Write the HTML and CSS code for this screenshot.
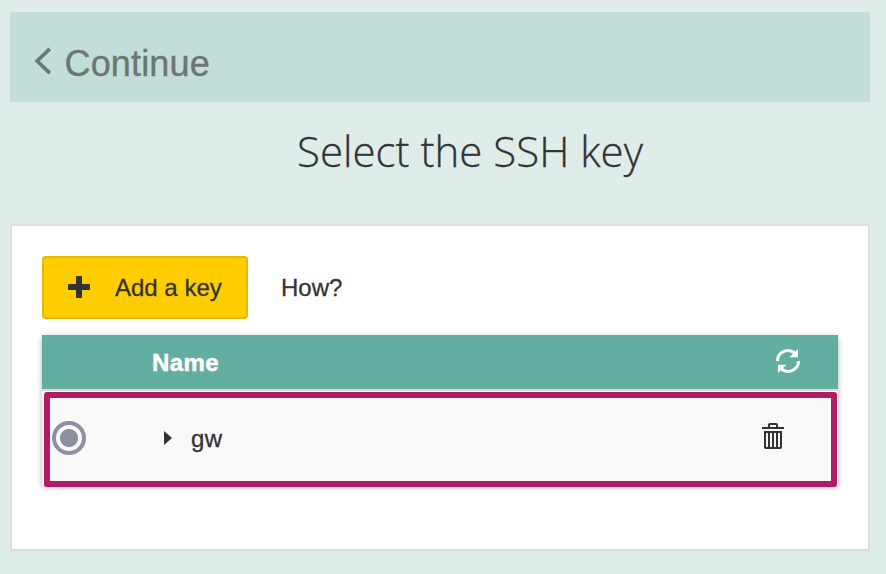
FILE: index.html
```html
<!DOCTYPE html>
<html lang="en">
<head>
<meta charset="utf-8">
<title>Select the SSH key</title>
<link rel="stylesheet" href="styles.css">
</head>
<body>
<header class="topbar">
  <svg class="back" width="18" height="28" viewBox="0 0 18 28"><path d="M15.8 1.8 L3.2 14 L15.8 26.2" fill="none" stroke="currentColor" stroke-width="3.7"/></svg>
  <span class="topbar-label">Continue</span>
</header>
<h1 class="title"><span class="title-text">Select the SSH key</span></h1>
<main class="card">
  <div class="actions">
    <button class="add" type="button">
      <svg width="22" height="22" viewBox="0 0 22 22"><path d="M9 0h4q1 0 1 1v7h7q1 0 1 1v4q0 1-1 1h-7v7q0 1-1 1H9q-1 0-1-1v-7H1q-1 0-1-1V9q0-1 1-1h7V1q0-1 1-1z" fill="currentColor"/></svg>
      <span>Add a key</span>
    </button>
    <a class="how">How?</a>
  </div>
  <section class="table">
    <div class="head">
      <span class="head-name">Name</span>
      <svg class="refresh" width="24" height="24" viewBox="0 0 24 24"><g fill="none" stroke="currentColor" stroke-width="3"><path d="M1.5 12A10.3 10.3 0 0 1 19.2 4.8"/><path d="M22.5 12A10.3 10.3 0 0 1 4.8 19.2"/></g><path d="M22 0v8.3h-8.5zM2 24v-8.3h8.5z" fill="currentColor"/></svg>
    </div>
    <div class="row">
      <span class="radio"></span>
      <svg class="caret" width="8" height="14" viewBox="0 0 8 14"><path d="M0 0L8 7L0 14z" fill="currentColor"/></svg>
      <span class="key">gw</span>
      <svg class="trash" width="22" height="26" viewBox="0 0 22 26"><g fill="none" stroke="currentColor" stroke-width="2"><path d="M0 5h22M7 5V2q0-1 1-1h6q1 0 1 1v3M3 9h16v15q0 1-1 1H4q-1 0-1-1zM7 9v16M11 9v16M15 9v16"/></g></svg>
      <div class="highlight"></div>
    </div>
  </section>
</main>
</body>
</html>
```

FILE: styles.css
```css
* { box-sizing: border-box; }
body {
  margin: 0;
  padding: 12px 16px 0 10px;
  height: 574px;
  overflow: hidden;
  background: #dfedea;
  color: #333;
  font-family: "Liberation Sans", Arial, sans-serif;
  font-size: 24px;
}
svg { display: block; flex: none; }
.topbar {
  display: flex;
  height: 90px;
  padding-left: 24px;
  background: #c3ded9;
  color: #6b7775;
}
.back { margin-top: 35px; }
.topbar-label {
  margin: 31px 0 0 12.5px;
  font-size: 36px;
  line-height: 41px;
  letter-spacing: 0.15px;
  -webkit-text-stroke: 0.4px currentColor;
}
.title {
  height: 122px;
  margin: 0;
  padding: 20px 0 0 60px;
  text-align: center;
  font-family: "Open Sans", sans-serif;
  font-size: 42px;
  font-weight: 300;
  line-height: 58px;
  -webkit-text-stroke: 0.3px #333;
}
.card {
  height: 327px;
  padding: 30px;
  border: 2px solid #dcdcdc;
  background: #fff;
}
.actions { display: flex; align-items: center; height: 63px; }
.add {
  display: flex;
  align-items: center;
  gap: 25px;
  width: 206px;
  height: 63px;
  padding: 0 0 0 24px;
  border: 2px solid #e6b800;
  border-radius: 4px;
  background: #ffcd00;
  color: #333;
  font: inherit;
  white-space: nowrap;
  -webkit-text-stroke: 0.3px #333;
}
.add svg { margin-top: -1px; }
.how { margin-left: 33px; -webkit-text-stroke: 0.3px #333; }
.table {
  margin-top: 16px;
  background: #f9f9f9;
  box-shadow: 0 2px 6px rgba(0, 0, 0, 0.3);
}
.head {
  display: flex;
  align-items: center;
  height: 56px;
  padding: 0 38px 2px 110px;
  border-bottom: 2px solid #d9dbdb;
  background: #62afa1;
  color: #fff;
  font-weight: 700;
}
.head-name { margin-top: 4px; letter-spacing: 0.4px; -webkit-text-stroke: 0.5px #fff; }
.refresh { margin-left: auto; }
.row {
  position: relative;
  display: flex;
  align-items: center;
  height: 94px;
  padding: 0 54px 0 10px;
}
.radio {
  width: 34px;
  height: 34px;
  border: 4px solid #8c90a0;
  border-radius: 50%;
  background: radial-gradient(circle, #8c90a0 8.6px, #f9f9f9 9.4px);
}
.caret { margin: -1px 0 0 78px; }
.key { margin: 2px 0 0 19px; letter-spacing: 0.3px; -webkit-text-stroke: 0.3px #333; }
.trash { margin: -4px 0 0 auto; }
.highlight {
  position: absolute;
  inset: 1px 1px -2px 2px;
  border: 6px solid #b01c65;
  border-radius: 3px;
}
```
